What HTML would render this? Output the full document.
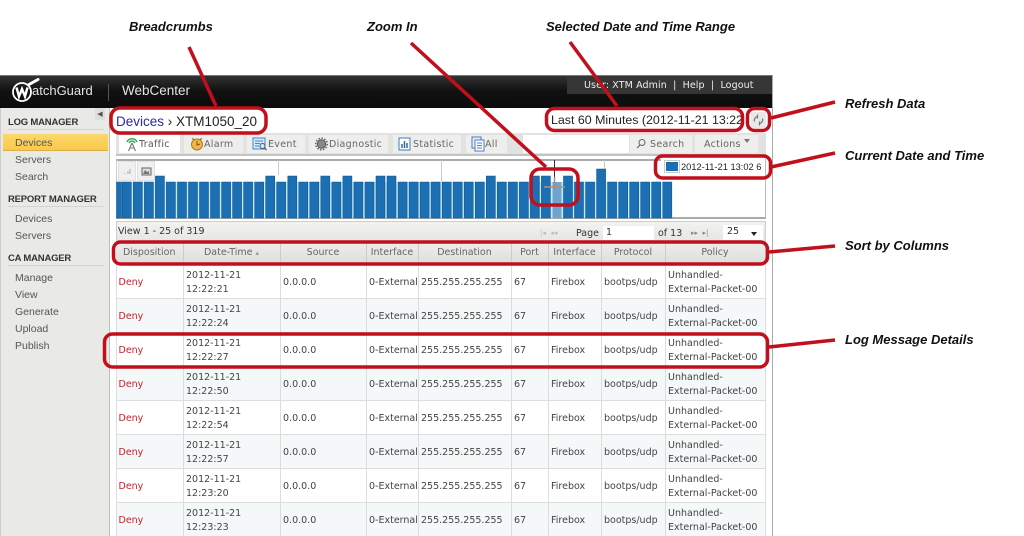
<!DOCTYPE html>
<html><head><meta charset="utf-8"><style>
*{box-sizing:border-box}
html,body{margin:0;padding:0;width:1024px;height:536px;overflow:hidden;background:#fff}
body{position:relative;font-family:"DejaVu Sans","Liberation Sans",sans-serif;font-size:9.5px;color:#444}
.a{position:absolute;white-space:nowrap}
.lab{font:italic bold 13px "Liberation Sans",sans-serif;color:#111;line-height:16px}
.nav{position:absolute;left:15px;margin-top:1px;font:10.5px "Liberation Sans",sans-serif;color:#555;line-height:12px}
.hd{position:absolute;left:8px;width:96px;font:bold 9.5px "Liberation Sans",sans-serif;letter-spacing:-.2px;white-space:nowrap;color:#333;line-height:12px;border-bottom:1px solid #d4d4d0}
.btn{position:absolute;top:135px;height:18px;background:#eeeeec;line-height:20px;color:#666;font-size:9.5px;letter-spacing:.3px;white-space:nowrap}
.btn svg{position:absolute;top:0;left:5px}
table{position:absolute;left:116px;top:241px;width:649px;border-collapse:collapse;table-layout:fixed}
th{height:23px;background:linear-gradient(#eeeeec,#dedede);font-weight:normal;font-size:9.5px;color:#666;border-right:1px solid #ccc;padding:0;white-space:nowrap}
td{height:34px;border-right:1px solid #ddd;border-bottom:1px solid #ddd;padding:4px 0 0 2.5px;line-height:14px;white-space:nowrap;overflow:visible;color:#444;font-size:9.5px}
tr.o td{background:#f4f8f9}
td.d{color:#c8202c}
</style></head><body>

<div class="a" style="left:0;top:75px;width:773px;height:461px;background:#fff;border-right:1px solid #aaa"></div>
<div class="a" style="left:0;top:75px;width:772px;height:33px;background:linear-gradient(#333,#111 45%,#0c0c0c);border-top:1px solid #777"></div>
<div class="a" style="left:567px;top:76px;width:205px;height:18px;background:#363636"></div>
<div class="a" style="left:108px;top:84px;width:1px;height:17px;background:#555"></div>
<svg class="a" style="left:8px;top:78px" width="38" height="28" viewBox="0 0 38 28"><circle cx="14" cy="14" r="9" fill="none" stroke="#fff" stroke-width="1.800"/><path d="M8.500 9.500l2.500 9 3-7.500 3 7.500 2.500-9" fill="none" stroke="#fff" stroke-width="2.400"/><path d="M21 6.500l9-5" stroke="#fff" stroke-width="3" stroke-linecap="round"/></svg>
<div class="a" style="left:32px;top:82px;font:13px/18px 'Liberation Sans',sans-serif;color:#e4e4e4">atchGuard</div>
<div class="a" style="left:122px;top:82px;font:13.5px/18px 'Liberation Sans',sans-serif;color:#e4e4e4">WebCenter</div>
<div class="a" style="left:584px;top:80px;font-size:9.5px;line-height:12px;color:#eee;letter-spacing:.1px">User: XTM Admin&nbsp; |&nbsp; Help&nbsp; |&nbsp; Logout</div>

<!-- sidebar -->
<div class="a" style="left:0;top:108px;width:110px;height:428px;background:#e9e9e5;border-right:1px solid #bdbdbd;border-left:1px solid #ccc"></div>
<div class="a" style="left:95px;top:108px;width:10px;height:12px;background:#dedede;color:#555;font-size:7px;line-height:12px;text-align:center">◀</div>
<div class="hd" style="top:117px">LOG MANAGER</div>
<div class="a" style="left:3px;top:134px;width:105px;height:17px;background:linear-gradient(#fbd76b,#f9c94a);border-bottom:1px solid #d9b04a"></div>
<div class="nav" style="top:136px">Devices</div>
<div class="nav" style="top:153px">Servers</div>
<div class="nav" style="top:170px">Search</div>
<div class="hd" style="top:194px">REPORT MANAGER</div>
<div class="nav" style="top:212px">Devices</div>
<div class="nav" style="top:229px">Servers</div>
<div class="hd" style="top:253px">CA MANAGER</div>
<div class="nav" style="top:271px">Manage</div>
<div class="nav" style="top:288px">View</div>
<div class="nav" style="top:305px">Generate</div>
<div class="nav" style="top:322px">Upload</div>
<div class="nav" style="top:339px">Publish</div>

<!-- breadcrumb / range -->
<div class="a" style="left:116px;top:113px;font:13.5px/18px 'Liberation Sans',sans-serif;color:#222"><span style="color:#2a2aa8">Devices</span> › XTM1050_20</div>
<div class="a" style="left:551px;top:112px;font:12.400px/17px 'Liberation Sans',sans-serif;color:#222">Last 60 Minutes (2012-11-21 13:22</div>
<div class="a" style="left:751px;top:112px;width:15px;height:16px;background:#e8e8e8"></div>
<svg class="a" style="left:751px;top:112px" width="15" height="16" viewBox="0 0 15 16"><path d="M3.500 9.500a4 4 0 0 1 3-5M11.500 6.500a4 4 0 0 1-3 5M6.500 2.500v4M8.500 9.500v4" fill="none" stroke="#777" stroke-width="1.200"/></svg>

<!-- toolbar -->
<div class="a" style="left:116px;top:133px;width:650px;height:23px;background:#e2e2e2;border-bottom:2px solid #c4c4c4"></div>
<div class="btn" style="left:119px;width:61px;background:#fff;padding-left:20px;color:#555">Traffic
<svg width="16" height="18" viewBox="0 0 16 18"><path d="M3 7a5.500 5.500 0 0 1 10 0M5 8a3.300 3.300 0 0 1 6 0" fill="none" stroke="#3bab52" stroke-width="1.500"/><path d="M8 8l-3.500 8M8 8l3.500 8M6 13h4" fill="none" stroke="#777" stroke-width="1.100"/></svg></div>
<div class="btn" style="left:184px;width:59px;padding-left:20px">Alarm
<svg width="16" height="18" viewBox="0 0 16 18"><circle cx="8" cy="9.500" r="5.500" fill="#f0b84a" stroke="#a87a20"/><path d="M8 6v4l3-1" fill="none" stroke="#8a4a10"/><path d="M3 3.500l2 1M13 3.500l-2 1" stroke="#a87a20" stroke-width="1.500"/></svg></div>
<div class="btn" style="left:247px;width:58px;padding-left:21px">Event
<svg width="16" height="18" viewBox="0 0 16 18"><rect x="1" y="3" width="12" height="11" fill="#d6e9f8" stroke="#3f86c8"/><path d="M3 6h8M3 8.500h5M3 11h4" stroke="#3f86c8"/><circle cx="10.500" cy="11" r="2.500" fill="none" stroke="#457"/><path d="M12.500 13l2 2" stroke="#457" stroke-width="1.200"/></svg></div>
<div class="btn" style="left:309px;width:79px;padding-left:20px">Diagnostic
<svg width="15" height="18" viewBox="0 0 15 18"><circle cx="7.500" cy="9" r="4.200" fill="#8a8a84" stroke="#555"/><circle cx="7.500" cy="9" r="5.800" fill="none" stroke="#666" stroke-width="1.500" stroke-dasharray="1.500 1.500"/></svg></div>
<div class="btn" style="left:393px;width:68px;padding-left:20px">Statistic
<svg width="14" height="18" viewBox="0 0 14 18"><rect x="1" y="3" width="11" height="12" fill="#fff" stroke="#3f7cc0"/><path d="M4 13V9M6.500 13V6M9 13V8" stroke="#2f6cb0" stroke-width="1.500"/></svg></div>
<div class="btn" style="left:466px;width:41px;padding-left:19px">All
<svg width="15" height="18" viewBox="0 0 15 18"><rect x="1" y="2" width="9" height="11" fill="#e4eefa" stroke="#4a7cc0"/><rect x="4" y="5" width="9" height="11" fill="#fff" stroke="#4a7cc0"/><path d="M6 8h5M6 10.500h5M6 13h5" stroke="#4a7cc0"/></svg></div>
<div class="a" style="left:523px;top:135px;width:106px;height:18px;background:#fff"></div>
<div class="btn" style="left:630px;width:62px;padding-left:20px">Search
<svg width="12" height="18" viewBox="0 0 12 18"><circle cx="7" cy="7.500" r="3" fill="none" stroke="#666"/><path d="M5 10l-3 3" stroke="#666" stroke-width="1.200"/></svg></div>
<div class="btn" style="left:695px;width:63px;padding-left:9px">Actions<span style="position:absolute;left:49px;top:4px;border:3px solid transparent;border-top:4px solid #777"></span></div>

<!-- chart -->
<div class="a" style="left:116px;top:159px;width:650px;height:60px;background:#fff;border-top:2px solid #aaa;border-right:1px solid #bbb;border-bottom:2px solid #aaa;border-left:1px solid #ccc"></div>
<div class="a" style="left:278px;top:160px;width:1px;height:15px;background:#ccc"></div>
<div class="a" style="left:441px;top:160px;width:1px;height:22px;background:#ccc"></div>
<div class="a" style="left:604px;top:160px;width:1px;height:10px;background:#ccc"></div>
<svg class="a" style="left:0;top:0" width="773" height="230" viewBox="0 0 773 230">
<rect x="116" y="182" width="556" height="36" fill="#c4ebf8"/>
<path fill="#1b6fb2" stroke="#14598f" stroke-width=".6" d="M116.500 182h5v36h-5zM122.300 182h9v36h-9zM133.300 182h9v36h-9zM144.400 182h9v36h-9zM155.400 176h9v42h-9zM166.400 182h9v36h-9zM177.500 182h9v36h-9zM188.500 182h9v36h-9zM199.500 182h9v36h-9zM210.500 182h9v36h-9zM221.600 182h9v36h-9zM232.600 182h9v36h-9zM243.600 182h9v36h-9zM254.700 182h9v36h-9zM265.700 176h9v42h-9zM276.700 182h9v36h-9zM287.800 176h9v42h-9zM298.800 182h9v36h-9zM309.800 182h9v36h-9zM320.800 176h9v42h-9zM331.900 182h9v36h-9zM342.900 176h9v42h-9zM353.900 182h9v36h-9zM365 182h9v36h-9zM376 176h9v42h-9zM387 176h9v42h-9zM398.100 182h9v36h-9zM409.100 182h9v36h-9zM420.100 182h9v36h-9zM431.100 182h9v36h-9zM442.200 182h9v36h-9zM453.200 182h9v36h-9zM464.200 182h9v36h-9zM475.300 182h9v36h-9zM486.300 176h9v42h-9zM497.300 182h9v36h-9zM508.400 182h9v36h-9zM519.400 182h9v36h-9zM530.400 176h9v42h-9zM541.400 176h9v42h-9zM563.500 176h9v42h-9zM574.500 182h9v36h-9zM585.600 182h9v36h-9zM596.600 169h9v49h-9zM607.600 182h9v36h-9zM618.700 182h9v36h-9zM629.700 182h9v36h-9zM640.700 182h9v36h-9zM651.700 182h9v36h-9zM662.800 182h9v36h-9z"/>
<rect x="552.500" y="182" width="9" height="36" fill="#6fa4d0"/>
<path d="M554.500 160v27" stroke="#333" stroke-width="1" fill="none"/>
<path d="M554.500 177v13" stroke="#a88" stroke-width="1.500" fill="none"/>
<path d="M544 187h21" stroke="#b89070" stroke-width="1.500" fill="none"/>
</svg>
<div class="a" style="left:118px;top:161px;width:18px;height:20px;background:#f0f0f0;border:1px solid #e0e0e0"></div>
<div class="a" style="left:137px;top:161px;width:18px;height:20px;background:#f0f0f0;border:1px solid #e0e0e0"></div>
<svg class="a" style="left:118px;top:161px" width="38" height="20" viewBox="0 0 38 20"><path d="M7 13v-1M10 13v-3M12 13V8" stroke="#aaa"/><rect x="24" y="7" width="9" height="7" fill="#ddd" stroke="#666"/><path d="M25 13l2-4 2 2 2-1v3z" fill="#777"/></svg>

<div class="a" style="left:661px;top:158px;width:104px;height:19px;background:#fff"></div>
<div class="a" style="left:664px;top:160px;width:16px;height:13px;border:1px solid #ccc;padding:1px"><div style="width:12px;height:9px;background:#1b6fb2"></div></div>
<div class="a" style="left:681px;top:160px;font:9.300px/14px 'Liberation Sans',sans-serif;color:#222">2012-11-21 13:02 6</div>

<!-- pager -->
<div class="a" style="left:116px;top:221px;width:650px;height:20px;background:linear-gradient(#f2f2f0,#e6e6e4);border:1px solid #ccc;border-bottom:0"></div>
<div class="a" style="left:118px;top:226px;line-height:12px;color:#333">View 1 - 25 of 319</div>
<div class="a" style="left:540px;top:228px;font-size:7px;line-height:10px;color:#bbb">|◂&nbsp; ◂◂</div>
<div class="a" style="left:576px;top:228px;line-height:12px;color:#333">Page</div>
<div class="a" style="left:603px;top:226px;width:51px;height:14px;background:#fff;line-height:14px;padding-left:3px;color:#333">1</div>
<div class="a" style="left:658px;top:228px;line-height:12px;color:#333">of 13</div>
<div class="a" style="left:691px;top:228px;font-size:7px;line-height:10px;color:#888">▸▸&nbsp; ▸|</div>
<div class="a" style="left:723px;top:225px;width:40px;height:15px;background:#fff;padding-left:4px;line-height:14px;color:#333">25<span style="position:absolute;left:28px;top:7px;border:3.500px solid transparent;border-top:4px solid #222"></span></div>

<!-- table -->
<table>
<colgroup><col style="width:67px"><col style="width:97px"><col style="width:86px"><col style="width:52px"><col style="width:93px"><col style="width:37px"><col style="width:53px"><col style="width:64px"><col style="width:100px"></colgroup>
<tr><th>Disposition</th><th>Date-Time <span style="color:#999;font-size:7px">▴</span></th><th>Source</th><th>Interface</th><th>Destination</th><th>Port</th><th>Interface</th><th>Protocol</th><th>Policy</th></tr>
<tr><td class="d">Deny</td><td>2012-11-21<br>12:22:21</td><td>0.0.0.0</td><td>0-External</td><td>255.255.255.255</td><td>67</td><td>Firebox</td><td>bootps/udp</td><td>Unhandled-<br>External-Packet-00</td></tr>
<tr class="o"><td class="d">Deny</td><td>2012-11-21<br>12:22:24</td><td>0.0.0.0</td><td>0-External</td><td>255.255.255.255</td><td>67</td><td>Firebox</td><td>bootps/udp</td><td>Unhandled-<br>External-Packet-00</td></tr>
<tr><td class="d">Deny</td><td>2012-11-21<br>12:22:27</td><td>0.0.0.0</td><td>0-External</td><td>255.255.255.255</td><td>67</td><td>Firebox</td><td>bootps/udp</td><td>Unhandled-<br>External-Packet-00</td></tr>
<tr class="o"><td class="d">Deny</td><td>2012-11-21<br>12:22:50</td><td>0.0.0.0</td><td>0-External</td><td>255.255.255.255</td><td>67</td><td>Firebox</td><td>bootps/udp</td><td>Unhandled-<br>External-Packet-00</td></tr>
<tr><td class="d">Deny</td><td>2012-11-21<br>12:22:54</td><td>0.0.0.0</td><td>0-External</td><td>255.255.255.255</td><td>67</td><td>Firebox</td><td>bootps/udp</td><td>Unhandled-<br>External-Packet-00</td></tr>
<tr class="o"><td class="d">Deny</td><td>2012-11-21<br>12:22:57</td><td>0.0.0.0</td><td>0-External</td><td>255.255.255.255</td><td>67</td><td>Firebox</td><td>bootps/udp</td><td>Unhandled-<br>External-Packet-00</td></tr>
<tr><td class="d">Deny</td><td>2012-11-21<br>12:23:20</td><td>0.0.0.0</td><td>0-External</td><td>255.255.255.255</td><td>67</td><td>Firebox</td><td>bootps/udp</td><td>Unhandled-<br>External-Packet-00</td></tr>
<tr class="o"><td class="d">Deny</td><td>2012-11-21<br>12:23:23</td><td>0.0.0.0</td><td>0-External</td><td>255.255.255.255</td><td>67</td><td>Firebox</td><td>bootps/udp</td><td>Unhandled-<br>External-Packet-00</td></tr>
</table>
<div class="a" style="left:116px;top:264px;width:1px;height:272px;background:#ddd"></div>
<div class="a" style="left:772px;top:75px;width:1px;height:461px;background:#aaa"></div>

<!-- annotations -->
<svg class="a" style="left:0;top:0" width="1024" height="536" viewBox="0 0 1024 536" fill="none" stroke="#c20f1c" stroke-width="3.500">
<path d="M189 47L216 106M411 43L546 167M570 42L617 106M771 118L835 102M771 167L835 153M769 252L835 246M769 347L835 340"/>
<rect x="111" y="108" width="155" height="25" rx="9"/>
<rect x="546.500" y="108.500" width="196" height="22" rx="8"/>
<rect x="747.500" y="108.500" width="22" height="22" rx="7"/>
<rect x="655.500" y="156" width="115" height="22" rx="7"/>
<rect x="531" y="169" width="47" height="36" rx="9"/>
<rect x="113.500" y="242" width="654" height="22" rx="7"/>
<rect x="104.500" y="334" width="663" height="33" rx="8"/>
</svg>
<div class="a lab" style="left:129px;top:19px">Breadcrumbs</div>
<div class="a lab" style="left:367px;top:19px">Zoom In</div>
<div class="a lab" style="left:546px;top:19px">Selected Date and Time Range</div>
<div class="a lab" style="left:845px;top:96px">Refresh Data</div>
<div class="a lab" style="left:845px;top:148px">Current Date and Time</div>
<div class="a lab" style="left:845px;top:238px">Sort by Columns</div>
<div class="a lab" style="left:845px;top:332px">Log Message Details</div>
</body></html>
